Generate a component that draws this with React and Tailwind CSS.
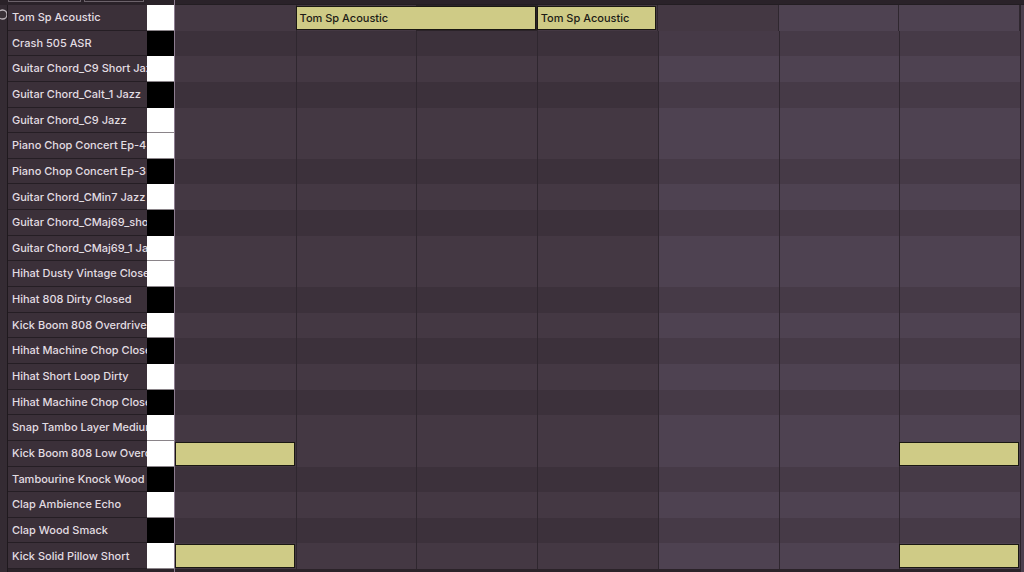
import React from 'react';

const tracks = [
  'Tom Sp Acoustic',
  'Crash 505 ASR',
  'Guitar Chord_C9 Short Jazz',
  'Guitar Chord_Calt_1 Jazz',
  'Guitar Chord_C9 Jazz',
  'Piano Chop Concert Ep-4',
  'Piano Chop Concert Ep-3',
  'Guitar Chord_CMin7 Jazz',
  'Guitar Chord_CMaj69_short',
  'Guitar Chord_CMaj69_1 Jazz',
  'Hihat Dusty Vintage Closed',
  'Hihat 808 Dirty Closed',
  'Kick Boom 808 Overdrive Tight',
  'Hihat Machine Chop Closed',
  'Hihat Short Loop Dirty',
  'Hihat Machine Chop Closed',
  'Snap Tambo Layer Medium',
  'Kick Boom 808 Low Overdrive',
  'Tambourine Knock Wood Short',
  'Clap Ambience Echo',
  'Clap Wood Smack',
  'Kick Solid Pillow Short',
];

// rows with a black key are the darker lanes
const blackRows = [1, 3, 6, 8, 11, 13, 15, 18, 20];

// notes per row: start column and span
const notes = {
  0: [
    { start: 'col-start-2', span: 'col-span-2', label: 'Tom Sp Acoustic' },
    { start: 'col-start-4', span: 'col-span-1', label: 'Tom Sp Acoustic' },
  ],
  17: [
    { start: 'col-start-1', span: 'col-span-1' },
    { start: 'col-start-7', span: 'col-span-1' },
  ],
  21: [
    { start: 'col-start-1', span: 'col-span-1' },
    { start: 'col-start-7', span: 'col-span-1' },
  ],
};

const cellColor = (beat, black) => {
  const lightBar = beat >= 4;
  if (lightBar) return black ? 'bg-[#463a47]' : 'bg-[#4e4251]';
  return black ? 'bg-[#3c313b]' : 'bg-[#443843]';
};

function GridRow({ index }) {
  const black = blackRows.includes(index);
  const rowNotes = notes[index] || [];
  return (
    <div className="grid grid-cols-7 flex-1 min-h-0">
      {[0, 1, 2, 3, 4, 5, 6].map((b) => (
        <div
          key={b}
          className={`row-start-1 col-start-${b + 1} ${cellColor(b, black)} ${b > 0 ? 'border-l border-[#2f272f]' : ''}`}
        />
      ))}
      {rowNotes.map((n, i) => (
        <div
          key={i}
          className={`row-start-1 ${n.start} ${n.span} mr-px my-px flex items-center pl-[3px] bg-[#cfcb86] border border-[#1a1812] overflow-hidden`}
        >
          <span className="text-[11px] font-medium text-[#1c1b17] whitespace-nowrap">{n.label}</span>
        </div>
      ))}
    </div>
  );
}

export default function App() {
  return (
    <div
      className="w-[1024px] h-[572px] overflow-hidden bg-[#2b2329] flex flex-col"
      style={{ fontFamily: 'Inter, "Noto Sans", sans-serif' }}
    >
      {/* cut-off toolbar strip at top */}
      <div className="h-[5px] flex shrink-0 bg-[#2a2229]">
        <div className="w-[8px]" />
        <div className="w-[73px] h-[2px] border-x border-b border-[#6b626a]" />
        <div className="w-[3px]" />
        <div className="w-[60px] h-[2px] border-x border-b border-[#6b626a]" />
        <div className="w-[30px]" />
        <div className="w-px bg-[#8c7c90]" />
        <div className="flex-1 border-b border-[#231d22]" />
      </div>

      <div className="flex flex-1 min-h-0">
        {/* left strip */}
        <div className="w-[8px] shrink-0 bg-[#342b33] border-r border-[#1f191e] relative overflow-hidden">
          <svg className="absolute left-[-3px] top-[4px]" width="11" height="11" viewBox="0 0 11 11">
            <circle cx="5.5" cy="5.5" r="4.5" fill="#3a3238" stroke="#b9b2b8" strokeWidth="1.3" />
          </svg>
        </div>

        {/* track names */}
        <div className="w-[139px] shrink-0 flex flex-col h-[564px]">
          {tracks.map((t, i) => (
            <div
              key={i}
              className="flex-1 min-h-0 flex items-center pl-[4px] bg-[#3b3039] border-b border-[#251e24] overflow-hidden"
            >
              <span className="text-[11px] font-medium text-[#e2dde2] whitespace-nowrap">{t}</span>
            </div>
          ))}
        </div>

        {/* piano keys */}
        <div className="w-[27px] shrink-0 flex flex-col h-[564px]">
          {tracks.map((t, i) => (
            <div
              key={i}
              className={`flex-1 min-h-0 border-b ${blackRows.includes(i) ? 'bg-black border-black' : 'bg-white border-[#8a8489]'}`}
            />
          ))}
        </div>
        <div className="w-px shrink-0 bg-[#8c7c90]" />

        {/* note grid */}
        <div className="w-[845px] shrink-0 flex flex-col h-[564px]">
          {tracks.map((t, i) => (
            <GridRow key={i} index={i} />
          ))}
        </div>
        <div className="flex-1 bg-[#4b3f4d] border-l border-[#2a2329]" />
      </div>
    </div>
  );
}
